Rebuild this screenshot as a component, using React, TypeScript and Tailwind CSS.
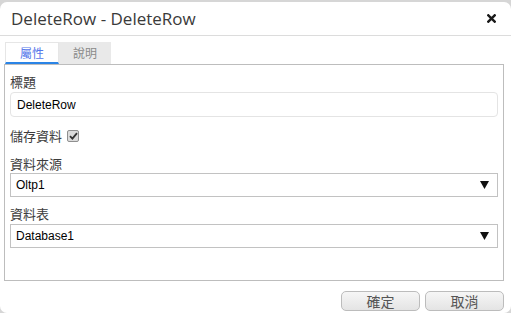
import React from 'react';

const cjk = '"Noto Sans CJK TC", "Liberation Sans", sans-serif';

function Arrow() {
  return (
    <svg width="9" height="8" viewBox="0 0 9 8" className="text-[#111]">
      <polygon points="0,0 9,0 4.5,8" fill="currentColor" />
    </svg>
  );
}

function SelectBox({ value }: { value: string }) {
  return (
    <div className="flex h-[24px] items-center justify-between border border-[#c2c2c2] bg-white pl-[5px] pr-[8px]">
      <span className="text-[12px] text-black" style={{ fontFamily: '"Liberation Sans", sans-serif' }}>{value}</span>
      <Arrow />
    </div>
  );
}

export default function App() {
  return (
    <div className="h-[313px] w-[511px] bg-[#d6d6d6] pt-[2px]" style={{ fontFamily: cjk }}>
      <div className="flex h-[311px] flex-col rounded-[7px] bg-white">
        {/* header */}
        <div className="flex h-[34px] items-center justify-between border-b border-[#dcdcdc] pl-[11px] pr-[15px]">
          <span className="text-[17px] text-[#3a3a3a]" style={{ fontFamily: '"Open Sans", sans-serif' }}>
            DeleteRow - DeleteRow
          </span>
          <svg width="9" height="9" viewBox="0 0 9 9">
            <path d="M1.3 1.3 L7.7 7.7 M7.7 1.3 L1.3 7.7" stroke="#1a1a1a" strokeWidth="2.4" strokeLinecap="square" />
          </svg>
        </div>

        {/* tabs */}
        <div className="ml-[5px] mt-[6px] flex">
          <div className="flex h-[22px] w-[54px] items-center justify-center border-x border-t border-[#e6e6e6] border-b-2 border-b-[#2a84e6] bg-white text-[12px] text-[#5577ea]">
            屬性
          </div>
          <div className="flex h-[22px] w-[52px] items-center justify-center bg-[#e9e9e9] text-[12px] text-[#8a8a8a]">
            說明
          </div>
        </div>

        {/* panel */}
        <div className="ml-[4px] mr-[7px] h-[217px] border border-[#bdbdbd] px-[5px] pt-[8px]">
          <div className="h-[18px] text-[13px] leading-[18px] text-[#3c3c3c]">標題</div>
          <div className="mt-[1px] flex h-[25px] items-center rounded-[4px] border border-[#e4e4e4] pl-[6px]">
            <span className="text-[12px] text-black" style={{ fontFamily: '"Liberation Sans", sans-serif' }}>DeleteRow</span>
          </div>

          <div className="mt-[10px] flex h-[18px] items-center gap-[5px]">
            <span className="text-[13px] leading-[18px] text-[#3c3c3c]">儲存資料</span>
            <div className="flex h-[12px] w-[12px] items-center justify-center rounded-[2px] border border-[#8f8f8f] bg-[#dcdcdc]">
              <svg width="9" height="8" viewBox="0 0 9 8">
                <path d="M1 4.2 L3.4 6.6 L8 1.2" stroke="#333" strokeWidth="1.8" fill="none" />
              </svg>
            </div>
          </div>

          <div className="mt-[10px] h-[18px] text-[13px] leading-[18px] text-[#3c3c3c]">資料來源</div>
          <SelectBox value="Oltp1" />

          <div className="mt-[8px] h-[18px] text-[13px] leading-[18px] text-[#3c3c3c]">資料表</div>
          <div className="mt-[1px]">
            <SelectBox value="Database1" />
          </div>
        </div>

        {/* footer */}
        <div className="mr-[7px] mt-[10px] flex justify-end gap-[5px]">
          <button className="flex h-[20px] w-[79px] items-center justify-center rounded-[5px] border border-[#bcbcbc] bg-gradient-to-b from-[#f6f6f6] to-[#e4e4e4] text-[14px] text-[#555]">
            確定
          </button>
          <button className="flex h-[20px] w-[79px] items-center justify-center rounded-[5px] border border-[#bcbcbc] bg-gradient-to-b from-[#f6f6f6] to-[#e4e4e4] text-[14px] text-[#555]">
            取消
          </button>
        </div>
      </div>
    </div>
  );
}
